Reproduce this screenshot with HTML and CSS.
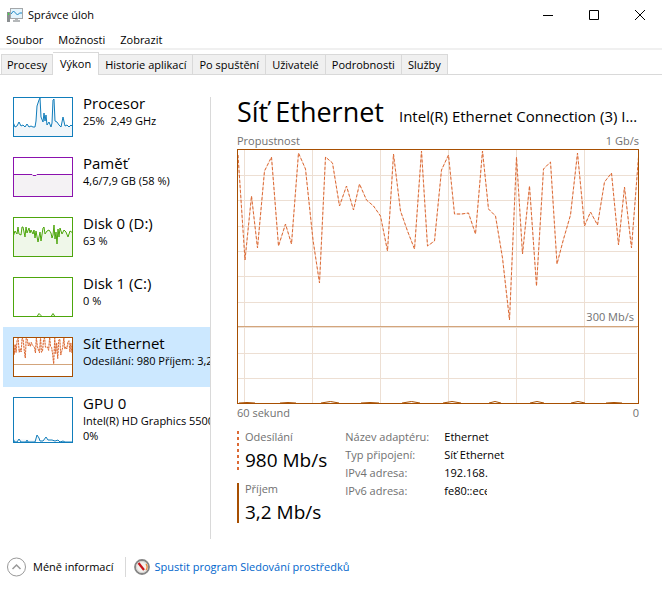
FILE: index.html
```html
<!DOCTYPE html>
<html lang="cs">

<head>
    <meta charset="UTF-8">
    <meta name="viewport" content="width=device-width, initial-scale=1.0">
    <title>Správce úloh</title>
    <link rel="stylesheet" href="styles.css">
</head>

<body>
    <!-- Title bar -->
    <header class="titlebar">
        <svg class="app-icon" width="16" height="14" viewBox="0 0 16 14">
            <rect x="0" y="4" width="3" height="10" fill="#8b8f91" />
            <rect x="1" y="5" width="1" height="2" fill="#3fe03f" />
            <rect x="3" y="0" width="13" height="11" fill="#a4a7a9" />
            <rect x="4" y="1" width="11" height="9" fill="#e4f4fc" />
            <path d="M4 6l2.500-3 4 4 2-2H15" fill="none" stroke="#1c86c4" />
            <path d="M8 11h3v1h2v2H6v-2h2z" fill="#b5b8ba" />
        </svg>
        <h1 class="window-title">Správce úloh</h1>
        <div class="window-controls">
            <button type="button" aria-label="Minimalizovat">
                <svg width="11" height="11" viewBox="0 0 11 11"><path d="M1 5.5h10" /></svg>
            </button>
            <button type="button" aria-label="Maximalizovat">
                <svg width="11" height="11" viewBox="0 0 11 11"><path d="M1.500.5h9v9h-9z" /></svg>
            </button>
            <button type="button" aria-label="Zavřít">
                <svg width="11" height="11" viewBox="0 0 11 11"><path d="M1 0l10 10M11 0L1 10" /></svg>
            </button>
        </div>
    </header>

    <!-- Menu -->
    <nav class="menu">
        <button type="button">Soubor</button>
        <button type="button">Možnosti</button>
        <button type="button">Zobrazit</button>
    </nav>

    <!-- Tabs -->
    <div class="tabs" role="tablist">
        <button type="button" role="tab" class="tab">Procesy</button>
        <button type="button" role="tab" class="tab active" aria-selected="true">Výkon</button>
        <button type="button" role="tab" class="tab">Historie aplikací</button>
        <button type="button" role="tab" class="tab">Po spuštění</button>
        <button type="button" role="tab" class="tab">Uživatelé</button>
        <button type="button" role="tab" class="tab">Podrobnosti</button>
        <button type="button" role="tab" class="tab">Služby</button>
    </div>

    <div class="content">
        <!-- Resource list -->
        <aside class="sidebar">
            <button type="button" class="resource">
                <svg class="thumb cpu" width="60" height="40" viewBox="0 0 60 40">
                    <path class="area" d="M0 25L2 30 4 29 6 25 8 29 10 28 12 30 14 27 16 30 18 29 20 30H22L23 24 24 9 26 3 27 1 28 20 30 25 31 16 32 24 33 18 34 28 36 25 38 30 39 26 40 3 41 2 42 24 44 25 46 28 48 30 50 20 52 29 54 28 56 30 58 28 60 30V40H0z" />
                    <rect x=".5" y=".5" width="59" height="39" />
                </svg>
                <span class="resource-text">
                    <span class="resource-name">Procesor</span>
                    <span class="resource-value">25%&nbsp; 2,49 GHz</span>
                </span>
            </button>
            <button type="button" class="resource">
                <svg class="thumb memory" width="60" height="40" viewBox="0 0 60 40">
                    <path class="area" d="M0 17.5h19l1 1h3l1-1h36V40H0z" />
                    <rect x=".5" y=".5" width="59" height="39" />
                </svg>
                <span class="resource-text">
                    <span class="resource-name">Paměť</span>
                    <span class="resource-value">4,6/7,9 GB (58 %)</span>
                </span>
            </button>
            <button type="button" class="resource">
                <svg class="thumb disk" width="60" height="40" viewBox="0 0 60 40">
                    <path class="area" d="M0 20L2 14 4 17 5 10 6 17 8 18 9 10H10L12 20 13 10 14 16 16 11 17 16 18 13 20 17 21 13 22 21 23 14 25 25 27 15 28 24 30 11 31 10 32 17 34 14 36 13 38 16 39 21 40 18 41 8 42 22 43 15 44 27 45 12 46 20 47 11 49 17 51 13 53 15 55 20 57 14 60 16V40H0z" />
                    <rect x=".5" y=".5" width="59" height="39" />
                </svg>
                <span class="resource-text">
                    <span class="resource-name">Disk 0 (D:)</span>
                    <span class="resource-value">63 %</span>
                </span>
            </button>
            <button type="button" class="resource">
                <svg class="thumb disk" width="60" height="40" viewBox="0 0 60 40">
                    <path class="area" d="M0 39.500h24l2-3 2 2 1 1h9l2-3 2 3h18" />
                    <rect x=".5" y=".5" width="59" height="39" />
                </svg>
                <span class="resource-text">
                    <span class="resource-name">Disk 1 (C:)</span>
                    <span class="resource-value">0 %</span>
                </span>
            </button>
            <button type="button" class="resource selected">
                <svg class="thumb network" width="60" height="40" viewBox="0 0 60 40">
                    <path class="limit" d="M0 27.500h60" />
                    <svg width="60" height="40" viewBox="0 0 402 255" preserveAspectRatio="none">
                        <use href="#send-line" class="send-glow" />
                        <use href="#send-line" class="send-mini" />
                    </svg>
                    <rect x=".5" y=".5" width="59" height="39" />
                </svg>
                <span class="resource-text">
                    <span class="resource-name">Síť Ethernet</span>
                    <span class="resource-value">Odesílání: 980 Příjem: 3,2 Mb/s</span>
                </span>
            </button>
            <button type="button" class="resource">
                <svg class="thumb cpu" width="60" height="46" viewBox="0 0 60 46">
                    <path class="area" d="M0 42L2 45H4L6 42 8 45H13L14 43 15 45H22L24 38 26 41 27 44H30L33 40 35 43 39 43 42 44 45 43 47 45 50 44 52 45H60" />
                    <rect x=".5" y=".5" width="59" height="45" />
                </svg>
                <span class="resource-text">
                    <span class="resource-name">GPU 0</span>
                    <span class="resource-value">Intel(R) HD Graphics 5500</span>
                    <span class="resource-value">0%</span>
                </span>
            </button>
        </aside>

        <!-- Network detail -->
        <main class="detail">
            <div class="detail-header">
                <h2>Síť Ethernet</h2>
                <p class="adapter">Intel(R) Ethernet Connection (3) I218-LM</p>
            </div>

            <div class="chart-labels">
                <span>Propustnost</span>
                <span>1 Gb/s</span>
            </div>
            <div class="chart">
                <svg viewBox="0 0 402 255" preserveAspectRatio="none">
                    <defs>
                        <path id="send-line" class="send-line" d="M1 6L8 111 14.500 47 20.500 99 27.500 22 34.500 8 41.500 97 48.500 75 54.500 95 61.500 4 68.500 20 76 91 82.500 134 88.500 8 95.500 14 102.500 57 109.500 37 116.500 61 122.500 35 129.500 51 136.500 57 143.500 67 150.500 102 156.500 5 163.500 62 170.500 82 177.500 100 184.500 2 190.500 97 197.500 92 204.500 21 211.500 6 217.500 65H224.500L231.500 64 238.500 85 245.500 2 251.500 60 258.500 67 265.500 109 272.500 171 279.500 8 285.500 105 292.500 37 299.500 137 306.500 20 313.500 13 320 115 326 92 333.500 66 340.500 4 347.500 77 353.500 63 360.500 76 367.500 33 374.500 24 381.500 96 387.500 38 394.500 99 401.500 8" />
                    </defs>
                    <path class="grid" d="M7.500 0v255M75.500 0v255M143.500 0v255M211.500 0v255M279.500 0v255M347.500 0v255M0 26.500h400M0 51.500h400M0 77.500h400M0 102.500h400M0 127.500h400M0 153.500h400M0 178.500h400M0 204.500h400M0 229.500h400" />
                    <path class="limit" d="M0 177.500h402" />
                    <use href="#send-line" class="send-glow" />
                    <use href="#send-line" class="send" />
                    <path class="receive" d="M2 254q8-1 16 0M43 254q8-1 16 0M84 254q10-3 18 0M124 254q9-1 18 0M165 254q10-3 18 0M206 254q9-3 18 0M252 254q6-3 12 0M293 254q7-3 14 0M334 254q7-3 14 0M369 254q8-1 16 0" />
                    <rect class="frame" x=".5" y=".5" width="401" height="254" />
                </svg>
                <span class="limit-label">300 Mb/s</span>
            </div>
            <div class="chart-labels">
                <span>60 sekund</span>
                <span>0</span>
            </div>

            <div class="stats">
                <div class="rates">
                    <div class="rate rate-send">
                        <span class="rate-name">Odesílání</span>
                        <span class="rate-value">980 Mb/s</span>
                    </div>
                    <div class="rate rate-receive">
                        <span class="rate-name">Příjem</span>
                        <span class="rate-value">3,2 Mb/s</span>
                    </div>
                </div>
                <dl class="info">
                    <dt>Název adaptéru:</dt>
                    <dd>Ethernet</dd>
                    <dt>Typ připojení:</dt>
                    <dd>Síť Ethernet</dd>
                    <dt>IPv4 adresa:</dt>
                    <dd>192.168.</dd>
                    <dt>IPv6 adresa:</dt>
                    <dd class="cut">fe80::ece</dd>
                </dl>
            </div>
        </main>
    </div>

    <!-- Footer -->
    <footer class="footer">
        <button type="button" class="less">
            <svg width="20" height="20" viewBox="0 0 20 20" fill="none">
                <circle cx="9.500" cy="10" r="9" stroke="#999" />
                <path d="M5.500 12l4-4 4 4" stroke="#999" stroke-width="1.500" />
            </svg>
            Méně informací
        </button>
        <a href="#" class="monitor-link">
            <svg width="16" height="16" viewBox="0 0 16 16" fill="none">
                <circle cx="8" cy="8" r="7" fill="#f3f1ee" stroke="#858585" stroke-width="1.800" />
                <circle cx="8" cy="8" r="5.500" stroke="#d6d4d1" />
                <path d="M12 5a5 5 0 0 1 0 6" stroke="#e98a3c" stroke-width="1.300" />
                <path d="M4.500 4l5.500 7" stroke="#c8141a" stroke-width="2.200" />
            </svg>
            Spustit program Sledování prostředků
        </a>
    </footer>
</body>

</html>
```
FILE: styles.css
```css
/* General Styles */
* {
    margin: 0;
    padding: 0;
    box-sizing: border-box;
}

body {
    display: flex;
    flex-direction: column;
    min-height: 100vh;
    background: #fff;
    color: #000;
    font-family: "Open Sans", "Noto Sans", sans-serif;
    font-size: 11px;
    line-height: 16px;
}

button {
    border: none;
    background: none;
    color: inherit;
    font: inherit;
    text-align: left;
    white-space: nowrap;
}

/* Title bar */
.titlebar {
    display: flex;
    align-items: center;
    height: 30px;
    padding-left: 7px;
}

.window-title {
    margin-left: 5px;
    font-size: 11px;
    font-weight: normal;
}

.window-controls {
    display: flex;
    margin-left: auto;
}

.window-controls button {
    display: flex;
    align-items: center;
    justify-content: center;
    width: 46px;
    height: 29px;
}

.window-controls path {
    fill: none;
    stroke: #000;
}

/* Menu */
.menu {
    display: flex;
    gap: 15px;
    padding: 2px 6px 0;
    border-bottom: 2px solid #f0f0f0;
}

/* Tabs */
.tabs {
    display: flex;
    align-items: flex-end;
    height: 25px;
    padding-left: 1px;
    border-bottom: 1px solid #d9d9d9;
}

.tab {
    height: 20px;
    padding: 2px 6px;
    border: 1px solid #d9d9d9;
    border-width: 1px 1px 0 0;
    background: #f0f0f0;
}

.tab:first-child {
    padding: 2px 5px;
    border-left-width: 1px;
}

.tab.active {
    height: 23px;
    margin-bottom: -1px;
    padding: 2px 7px;
    background: #fff;
}

/* Content */
.content {
    display: flex;
    flex: 1;
    padding-top: 12px;
}

/* Resource list */
.sidebar {
    flex: 0 0 211px;
    padding-left: 3px;
    background: linear-gradient(#d9d9d9, #d9d9d9) no-repeat;
    background-position: right 0 top 10px;
    background-size: 1px 100%;
    overflow: hidden;
}

.resource {
    display: flex;
    align-items: flex-start;
    gap: 10px;
    width: 207px;
    height: 60px;
    padding: 6px 0 0 10px;
    overflow: hidden;
}

.resource.selected {
    background: #cce8ff;
}

.resource-text {
    display: flex;
    flex-direction: column;
}

.resource-name {
    font-size: 15px;
    line-height: 20px;
}

.resource-value {
    line-height: 15px;
}

.thumb {
    flex: none;
    margin-top: 4px;
    background: #fff;
    fill: none;
}

.cpu {
    stroke: #117dbb;
}

.cpu .area {
    fill: #f1f6fa;
}

.memory {
    stroke: #8b12ae;
}

.memory .area {
    fill: #f4f2f4;
}

.disk {
    stroke: #4da60c;
}

.disk .area {
    fill: #eff7e9;
}

.network {
    stroke: #a74f01;
}

.limit {
    stroke: #d3a57c;
}

/* Detail */
.detail {
    flex: 1;
    min-width: 0;
    padding: 5px 23px 0 26px;
}

.detail-header {
    display: flex;
    align-items: baseline;
    gap: 15px;
}

.detail-header h2 {
    flex: none;
    font-size: 27px;
    font-weight: normal;
    line-height: 40px;
}

.adapter {
    overflow: hidden;
    font-size: 15px;
    line-height: 20px;
    text-overflow: ellipsis;
    white-space: nowrap;
}

.chart-labels {
    display: flex;
    justify-content: space-between;
    color: #707070;
    line-height: 17px;
}

.chart {
    position: relative;
    height: 255px;
}

.chart svg {
    display: block;
    width: 100%;
    height: 100%;
    fill: none;
}

.grid {
    stroke: #eddfd3;
}

.frame {
    stroke: #a74f01;
}

.receive {
    stroke: #a74f01;
}

.send-line {
    vector-effect: non-scaling-stroke;
}

.send {
    stroke: #dc6a35;
    stroke-dasharray: 3 2;
}

.send-mini {
    stroke: #dc6a35;
    stroke-dasharray: 2 1;
}

.send-glow {
    stroke: #dc6a35;
    stroke-opacity: 0.3;
}

.limit-label {
    position: absolute;
    right: 5px;
    bottom: 79px;
    color: #707070;
}

/* Stats */
.stats {
    display: flex;
    gap: 18px;
    margin-top: 7px;
}

.rates {
    display: flex;
    flex-direction: column;
    gap: 12px;
    padding-top: 3px;
}

.rate {
    display: flex;
    flex-direction: column;
    height: 40px;
    padding-left: 6px;
    border-left: 2px solid #a74f01;
}

.rate-send {
    border-left-color: transparent;
    background: repeating-linear-gradient(#dc6a35 0 3px, #fff 3px 6px) left / 2px 100% no-repeat border-box;
}

.rate-name {
    color: #707070;
    line-height: 12px;
}

.rate-value {
    font-size: 19px;
    line-height: 34px;
    white-space: nowrap;
}

.info {
    display: grid;
    grid-template-columns: 99px auto;
    align-content: start;
    line-height: 18px;
}

.info dt {
    color: #707070;
}

.info .cut {
    width: 43px;
    overflow: hidden;
}

/* Footer */
.footer {
    display: flex;
    align-items: center;
    height: 55px;
    padding-left: 7px;
}

.less,
.monitor-link {
    display: flex;
    align-items: center;
}

.less {
    gap: 6px;
    padding-right: 11px;
    border-right: 1px solid #d9d9d9;
    line-height: 16px;
}

.monitor-link {
    gap: 5px;
    padding-left: 8px;
    color: #0066cc;
    text-decoration: none;
}
```
